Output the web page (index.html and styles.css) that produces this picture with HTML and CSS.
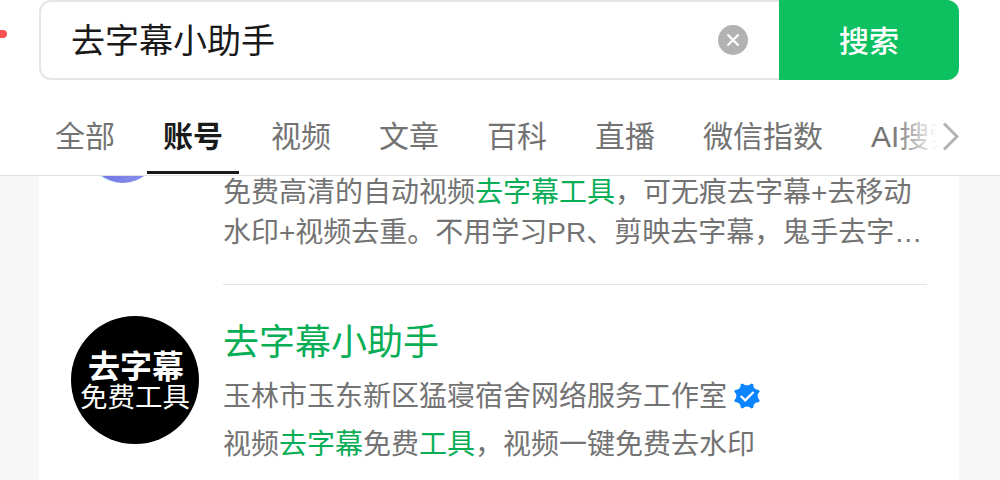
FILE: index.html
```
<!DOCTYPE html>
<html lang="zh-CN">
<head>
  <meta charset="UTF-8" />
  <meta name="viewport" content="width=device-width, initial-scale=1.0" />
  <title>去字幕小助手 - 搜索</title>
  <link rel="stylesheet" href="styles.css">
</head>
<body>
  <header class="header">
    <span class="red-dot"></span>
    <div class="search-bar">
      <div class="search-input">
        <span class="query">去字幕小助手</span>
        <svg class="clear" viewBox="0 0 30 30">
          <circle cx="15" cy="15" r="15" fill="#b2b2b2" />
          <path d="M9.5 9.5l11 11M20.5 9.5l-11 11" stroke="#fff" stroke-width="2.2" fill="none" />
        </svg>
      </div>
      <button class="search-btn">搜索</button>
    </div>
    <nav class="tabs">
      <a class="tab">全部</a>
      <a class="tab active">账号</a>
      <a class="tab">视频</a>
      <a class="tab">文章</a>
      <a class="tab">百科</a>
      <a class="tab">直播</a>
      <a class="tab">微信指数</a>
      <a class="tab">AI搜索</a>
    </nav>
    <div class="tabs-more">
      <svg width="18" height="30" viewBox="0 0 18 30">
        <path d="M3 2.5L16 15.5L3 28.5" stroke="#b2b2b2" stroke-width="3" fill="none" />
      </svg>
    </div>
  </header>

  <main class="results">
    <div class="item item-first">
      <div class="avatar avatar-blob">
        <svg width="128" height="128" viewBox="0 0 128 128">
          <defs>
            <linearGradient id="blob" x1="0" x2="1">
              <stop offset="0.15" stop-color="#6f70e8" />
              <stop offset="0.6" stop-color="#8389e6" />
            </linearGradient>
          </defs>
          <circle cx="49" cy="76" r="35" fill="#d5f8ff" />
          <circle cx="52" cy="76" r="35" fill="url(#blob)" />
        </svg>
      </div>
      <div class="info">
        <p class="desc">免费高清的自动视频<em>去字幕工具</em>，可无痕去字幕+去移动<br>水印+视频去重。不用学习PR、剪映去字幕，鬼手去字…</p>
      </div>
    </div>
    <div class="item">
      <div class="avatar avatar-black">
        <span class="avatar-top">去字幕</span>
        <span class="avatar-bottom">免费工具</span>
      </div>
      <div class="info">
        <h3 class="title">去字幕小助手</h3>
        <div class="owner">
          <span>玉林市玉东新区猛寝宿舍网络服务工作室</span>
          <svg class="verified" viewBox="0 0 26 26">
            <path d="M8.5 0.4Q10.8 2.4 13 2.4Q15.2 2.4 17.5 0.4L19.2 1.2Q19.3 4.3 20.7 5.6Q22 6.8 25 6.9L25.7 8.6Q23.6 10.8 23.6 13Q23.6 15.2 25.7 17.4L25 19.1Q22 19.2 20.7 20.4Q19.3 21.7 19.2 24.8L17.5 25.6Q15.2 23.6 13 23.6Q10.8 23.6 8.5 25.6L6.8 24.8Q6.7 21.7 5.3 20.4Q4 19.2 1 19.1L0.3 17.4Q2.4 15.2 2.4 13Q2.4 10.8 0.3 8.6L1 6.9Q4 6.8 5.3 5.6Q6.7 4.3 6.8 1.2Z" fill="#0a84ff" />
            <path d="M6.8 13l4.4 4.4L19.6 9" stroke="#fff" stroke-width="2.2" fill="none" />
          </svg>
        </div>
        <p class="desc">视频<em>去字幕</em>免费<em>工具</em>，视频一键免费去水印</p>
      </div>
    </div>
  </main>
</body>
</html>
```

FILE: styles.css
```
* {
  box-sizing: border-box;
}
body {
  margin: 0;
  height: 480px;
  overflow: hidden;
  background: #f7f7f7;
  color: #737373;
  font-family: "Liberation Sans", "Noto Sans CJK SC", sans-serif;
}
.header {
  position: relative;
  height: 176px;
  padding: 0 41px 0 39px;
  background: #fff;
  border-bottom: 1px solid #e3e3e3;
}
/* unread badge sticking out of the window edge */
.red-dot {
  position: absolute;
  left: -10px;
  top: 30px;
  width: 17px;
  height: 8px;
  border-radius: 4px;
  background: #fa5151;
}
.search-bar {
  display: flex;
  height: 80px;
}
.search-input {
  flex: 1;
  display: flex;
  align-items: center;
  justify-content: space-between;
  padding: 0 31px 0 30px;
  border: 2px solid #e5e5e5;
  border-right: none;
  border-radius: 12px 0 0 12px;
}
.query {
  padding-top: 1px;
  font-size: 34px;
  line-height: 76px;
  color: #1a1a1a;
}
.clear {
  width: 30px;
  height: 30px;
}
.search-btn {
  width: 180px;
  padding: 0 0 3px;
  border: none;
  border-radius: 0 12px 12px 0;
  background: #0dc160;
  color: #fff;
  font-family: inherit;
  font-size: 30px;
  font-weight: 500;
}
.tabs {
  display: flex;
  gap: 16px;
  height: 94px;
  overflow: hidden;
}
.tab {
  flex: none;
  padding: 37px 16px 0;
  font-size: 30px;
  line-height: 40px;
}
.tab.active {
  color: #1a1a1a;
  font-weight: bold;
  border-bottom: 3px solid #1a1a1a;
}
.tabs-more {
  position: absolute;
  right: 0;
  top: 100px;
  width: 120px;
  height: 72px;
  padding: 21px 0 0 61px;
  background: linear-gradient(to right, rgba(255, 255, 255, 0) 10%, #fff 48%);
}
.results {
  width: 920px;
  height: 304px;
  margin-left: 39px;
  padding: 0 32px;
  background: #fff;
  overflow: hidden;
}
.item {
  display: flex;
  gap: 24px;
  padding-top: 31px;
}
.item-first {
  height: 109px;
  padding-top: 0;
}
.item-first .info {
  border-bottom: 1px solid #e3e3e3;
}
.item-first .desc {
  margin-top: -3px;
}
.avatar {
  flex: none;
  width: 128px;
  height: 128px;
  border-radius: 50%;
}
.avatar-blob {
  margin-top: -104px;
}
.avatar-black {
  display: flex;
  flex-direction: column;
  align-items: center;
  padding-top: 35px;
  background: #000;
  color: #fff;
}
.avatar-top {
  padding-left: 2px;
  font-size: 32px;
  font-weight: bold;
  line-height: 32px;
}
.avatar-bottom {
  font-size: 27.5px;
  line-height: 30px;
}
.info {
  width: 704px;
}
.title {
  margin: 0;
  padding-top: 1px;
  font-size: 36px;
  font-weight: normal;
  line-height: 52px;
  color: #07ae56;
}
.owner {
  display: flex;
  align-items: center;
  gap: 7px;
  height: 40px;
  margin: 7px 0 9px;
  font-size: 28px;
  line-height: 40px;
}
.owner span {
  padding-top: 2px;
}
.verified {
  width: 26px;
  height: 26px;
}
.desc {
  margin: 0;
  font-size: 28px;
  line-height: 40px;
  white-space: nowrap;
}
.desc em {
  font-style: normal;
  color: #07ae56;
}
```
